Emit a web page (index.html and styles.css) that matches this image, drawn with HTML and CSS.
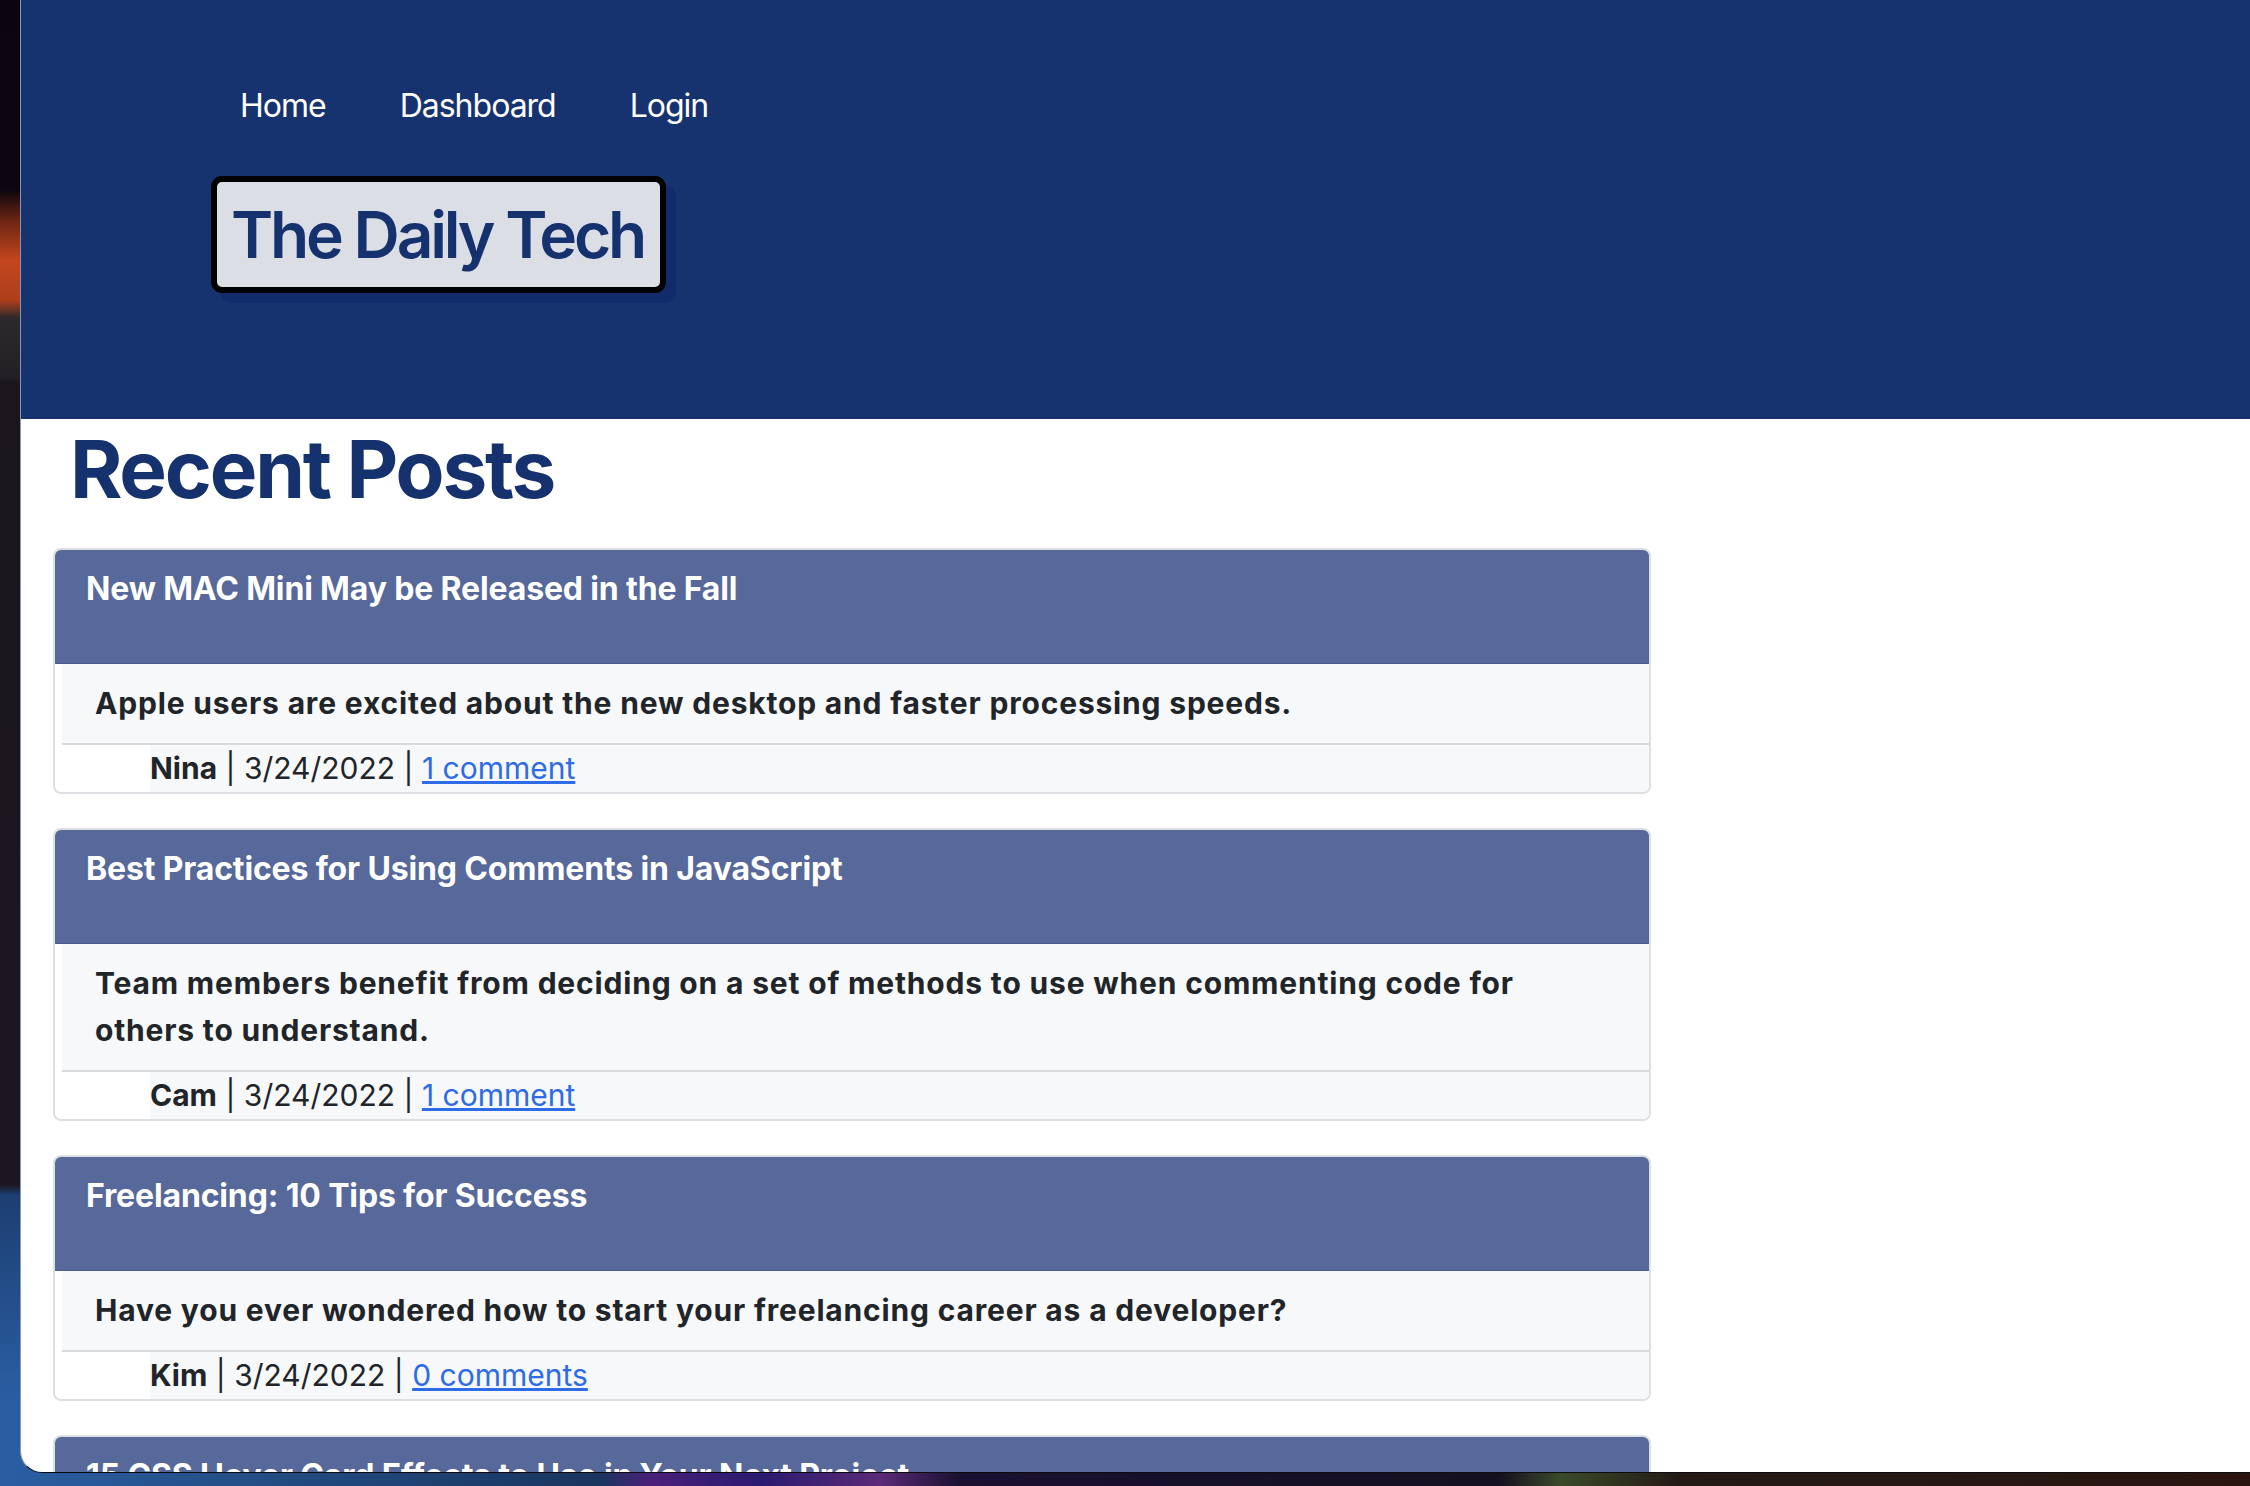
FILE: index.html
```html
<!DOCTYPE html>
<html lang="en">
<head>
<meta charset="utf-8">
<title>The Daily Tech</title>
<link rel="stylesheet" href="styles.css">
</head>
<body>
<div class="desktop">
  <div class="window">
    <header class="site-header">
      <nav class="nav">
        <a class="nav-link" href="#">Home</a>
        <a class="nav-link" href="#">Dashboard</a>
        <a class="nav-link" href="#">Login</a>
      </nav>
      <div class="brand">
        <h1 class="brand-title">The Daily Tech</h1>
      </div>
    </header>
    <main class="main">
      <h2 class="page-title">Recent Posts</h2>

      <article class="card">
        <div class="card-header"><h3 class="card-title">New MAC Mini May be Released in the Fall</h3></div>
        <div class="card-body"><p class="card-text">Apple users are excited about the new desktop and faster processing speeds.</p></div>
        <div class="card-footer"><strong>Nina</strong> | 3/24/2022 | <a class="comment-link" href="#">1 comment</a></div>
      </article>

      <article class="card">
        <div class="card-header"><h3 class="card-title">Best Practices for Using Comments in JavaScript</h3></div>
        <div class="card-body"><p class="card-text">Team members benefit from deciding on a set of methods to use when commenting code for others to understand.</p></div>
        <div class="card-footer"><strong>Cam</strong> | 3/24/2022 | <a class="comment-link" href="#">1 comment</a></div>
      </article>

      <article class="card">
        <div class="card-header"><h3 class="card-title">Freelancing: 10 Tips for Success</h3></div>
        <div class="card-body"><p class="card-text">Have you ever wondered how to start your freelancing career as a developer?</p></div>
        <div class="card-footer"><strong>Kim</strong> | 3/24/2022 | <a class="comment-link" href="#">0 comments</a></div>
      </article>

      <article class="card">
        <div class="card-header"><h3 class="card-title">15 CSS Hover Card Effects to Use in Your Next Project</h3></div>
        <div class="card-body"><p class="card-text">Add some motion to your layouts with these hover effects.</p></div>
        <div class="card-footer"><strong>Nina</strong> | 3/24/2022 | <a class="comment-link" href="#">0 comments</a></div>
      </article>
    </main>
  </div>
</div>
</body>
</html>
```

FILE: styles.css
```css
html, body {
  margin: 0;
  padding: 0;
  height: 100%;
  overflow: hidden;
}

body {
  font-family: Inter, "Noto Sans", "Liberation Sans", sans-serif;
  color: #212529;
}

.desktop {
  box-sizing: border-box;
  height: 1486px;
  padding-left: 20px;
  padding-bottom: 13px;
  background:
    linear-gradient(180deg,
      #0a0511 0px, #0c0610 190px, #6a2414 220px, #c2461f 260px, #b03f1c 300px,
      #2b292c 318px, #222024 378px, #1a161c 382px, #1c1620 1185px,
      #1d3f72 1195px, #2a5ea2 1400px, #2a5ea2 1486px) left top / 20px 100% no-repeat,
    linear-gradient(90deg,
      #2b5fa3 0px, #1e4272 420px, #1a355e 600px, #4a1f7a 650px, #2a1a70 760px,
      #5b2a78 880px, #1a1030 960px, #141020 1500px, #3a4a2a 1560px, #241a14 1680px,
      #2a1410 2250px);
}

.window {
  box-sizing: border-box;
  height: 1473px;
  background: #ffffff;
  border-left: 1px solid #8a97b6;
  border-bottom: 1px solid #0c0c10;
  border-bottom-left-radius: 22px;
  overflow: hidden;
}

/* Header */
.site-header {
  box-sizing: border-box;
  height: 419px;
  background: #16336f;
  padding: 82px 0 0 190px;
}

.nav {
  display: flex;
  gap: 74px;
  padding-left: 29px;
  height: 48px;
}

.nav-link {
  color: #ffffff;
  text-decoration: none;
  font-size: 32px;
  line-height: 48px;
  font-weight: 400;
  letter-spacing: -1px;
}

.brand {
  display: inline-block;
  margin-top: 46px;
  background: #dcdee6;
  border: 6px solid #000000;
  border-radius: 11px;
  box-shadow: 10px 10px 0 #112b6c;
  padding: 14px 16px 14px 14px;
}

.brand-title {
  margin: 0;
  font-size: 64px;
  line-height: 77px;
  font-weight: 600;
  letter-spacing: -3.2px;
  color: #15326e;
}

/* Main */
.main {
  padding: 2px 0 0 32px;
}

.page-title {
  margin: 0 0 31px 0;
  padding-left: 17px;
  font-size: 80px;
  line-height: 96px;
  font-weight: 700;
  letter-spacing: -2.2px;
  color: #15326e;
}

.card {
  width: 1598px;
  box-sizing: border-box;
  border: 2px solid #dedfe2;
  border-radius: 8px;
  overflow: hidden;
  margin-bottom: 34px;
  background: #ffffff;
}

.card-header {
  background: #57689a;
  padding: 15px 31px 50px 31px;
  border-bottom: 1px solid #4d5d8e;
}

.card-title {
  margin: 0;
  color: #ffffff;
  font-size: 32px;
  line-height: 48px;
  font-weight: 700;
  letter-spacing: -0.15px;
}

.card-body {
  margin-left: 7px;
  background: #f7f8fa;
  padding: 16px 70px 16px 33px;
  border-bottom: 2px solid #d8d9dd;
}

.card-text {
  margin: 0;
  font-size: 30px;
  line-height: 47px;
  font-weight: 700;
  letter-spacing: 0.82px;
}

.card-footer {
  margin-left: 95px;
  background: #f7f8fa;
  font-size: 30px;
  line-height: 47px;
  font-weight: 400;
}

.card-footer strong {
  font-weight: 700;
}

.comment-link {
  color: #2e6be6;
  text-decoration: underline;
}
```
